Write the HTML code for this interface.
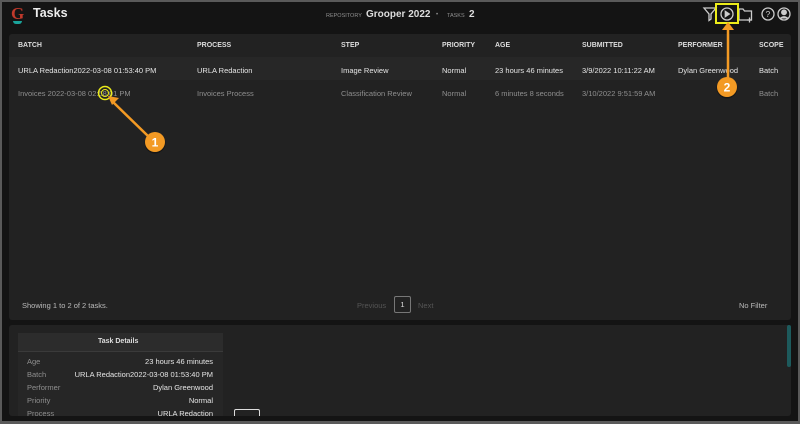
<!DOCTYPE html>
<html><head><meta charset="utf-8"><style>
*{margin:0;padding:0;box-sizing:border-box}
body{width:800px;height:424px;background:#5a5a5a;font-family:"Liberation Sans",sans-serif;overflow:hidden;position:relative}
.frame{position:absolute;left:2px;top:2px;width:796px;height:419px;background:#141414}
.t{position:absolute;white-space:nowrap;font-size:7.5px;color:#e6e6e6}
.h{font-weight:bold;font-size:7px;color:#ddd}
.g{color:#8f8f8f}
.panel{position:absolute;background:#222;border-radius:3px}
</style></head><body>
<div class="frame"></div>
<div class="t" style="left:11px;top:4px;font-family:'Liberation Serif',serif;font-size:17px;color:#c0392b;font-weight:bold">G</div>
<div style="position:absolute;left:13px;top:21px;width:9px;height:3px;background:#1aa39a;border-radius:0 0 4px 4px"></div>
<div class="t" style="left:33px;top:6px;font-size:12.5px;font-weight:bold;color:#eee">Tasks</div>
<div class="t g" style="left:326px;top:13px;font-size:5.5px">REPOSITORY</div>
<div class="t" style="left:366px;top:9px;font-size:10px;font-weight:bold;color:#ddd">Grooper 2022</div>
<div class="t g" style="left:436px;top:12px;font-size:6px">•</div>
<div class="t g" style="left:447px;top:13px;font-size:5.5px">TASKS</div>
<div class="t" style="left:469px;top:9px;font-size:10px;font-weight:bold;color:#ddd">2</div>
<svg style="position:absolute;left:700px;top:2px" width="96" height="24" viewBox="0 0 96 24" fill="none" stroke="#ccc" stroke-width="1.3">
<path d="M4 6h12l-5 6v5l-2 1.5v-6.5z"/>
<circle cx="27" cy="12" r="6"/><path d="M25.3 9.3v5.4l4-2.7z" fill="#ccc"/>
<path d="M39 7h4l1.5 2h7v9h-12.5z"/><path d="M47 18h5M49.5 15.5v5"/>
<circle cx="68" cy="12" r="6"/><text x="65.5" y="15" font-size="8.5" fill="#ccc" stroke="none" font-family="Liberation Sans">?</text>
<circle cx="84" cy="12" r="6"/><circle cx="84" cy="10.3" r="2.3" fill="#ccc"/><path d="M80 16.5q4-3.5 8 0" fill="#ccc"/>
</svg>
<div style="position:absolute;left:715px;top:3px;width:24px;height:21px;border:2px solid #ecec1a"></div>
<div class="panel" style="left:9px;top:34px;width:782px;height:286px"></div>
<div style="position:absolute;left:9px;top:57px;width:782px;height:23px;background:#272727"></div>
<div class="t h" style="left:18px;top:42px">BATCH</div>
<div class="t h" style="left:197px;top:42px">PROCESS</div>
<div class="t h" style="left:341px;top:42px">STEP</div>
<div class="t h" style="left:442px;top:42px">PRIORITY</div>
<div class="t h" style="left:495px;top:42px">AGE</div>
<div class="t h" style="left:582px;top:42px">SUBMITTED</div>
<div class="t h" style="left:678px;top:42px">PERFORMER</div>
<div class="t h" style="left:759px;top:42px">SCOPE</div>
<div class="t" style="left:18px;top:66px">URLA Redaction2022-03-08 01:53:40 PM</div>
<div class="t" style="left:197px;top:66px">URLA Redaction</div>
<div class="t" style="left:341px;top:66px">Image Review</div>
<div class="t" style="left:442px;top:66px">Normal</div>
<div class="t" style="left:495px;top:66px">23 hours 46 minutes</div>
<div class="t" style="left:582px;top:66px">3/9/2022 10:11:22 AM</div>
<div class="t" style="left:678px;top:66px">Dylan Greenwood</div>
<div class="t" style="left:759px;top:66px">Batch</div>
<div class="t g" style="left:18px;top:89px">Invoices 2022-03-08 02:58:01 PM</div>
<div class="t g" style="left:197px;top:89px">Invoices Process</div>
<div class="t g" style="left:341px;top:89px">Classification Review</div>
<div class="t g" style="left:442px;top:89px">Normal</div>
<div class="t g" style="left:495px;top:89px">6 minutes 8 seconds</div>
<div class="t g" style="left:582px;top:89px">3/10/2022 9:51:59 AM</div>
<div class="t g" style="left:759px;top:89px">Batch</div>
<div class="t g" style="left:22px;top:301px;color:#bbb">Showing 1 to 2 of 2 tasks.</div>
<div class="t" style="left:357px;top:301px;color:#555">Previous</div>
<div style="position:absolute;left:394px;top:296px;width:17px;height:17px;border:1px solid #777;border-radius:2px;color:#ddd;font-size:7.5px;text-align:center;line-height:15px">1</div>
<div class="t" style="left:418px;top:301px;color:#555">Next</div>
<div class="t" style="left:739px;top:301px;color:#bbb">No Filter</div>
<div class="panel" style="left:9px;top:325px;width:782px;height:91px"></div>
<div style="position:absolute;left:787px;top:325px;width:4px;height:42px;background:#1d5a5c;border-radius:2px"></div>
<div style="position:absolute;left:18px;top:333px;width:205px;height:83px;background:#262626"></div>
<div style="position:absolute;left:18px;top:333px;width:205px;height:19px;background:#2c2c2c;border-bottom:1px solid #3a3a3a"></div>
<div class="t" style="left:98px;top:338px;font-weight:bold;color:#ddd;font-size:7px">Task Details</div>
<div class="t g" style="left:27px;top:357px">Age</div><div class="t" style="right:587px;top:357px">23 hours 46 minutes</div>
<div class="t g" style="left:27px;top:370px">Batch</div><div class="t" style="right:587px;top:370px">URLA Redaction2022-03-08 01:53:40 PM</div>
<div class="t g" style="left:27px;top:383px">Performer</div><div class="t" style="right:587px;top:383px">Dylan Greenwood</div>
<div class="t g" style="left:27px;top:396px">Priority</div><div class="t" style="right:587px;top:396px">Normal</div>
<div class="t g" style="left:27px;top:409px">Process</div><div class="t" style="right:587px;top:409px">URLA Redaction</div>
<div style="position:absolute;left:234px;top:409px;width:26px;height:8px;border:1px solid #ddd;border-bottom:none;border-radius:2px 2px 0 0"></div>
<div style="position:absolute;left:9px;top:416px;width:782px;height:5px;background:#141414"></div>
<svg style="position:absolute;left:0;top:0" width="800" height="424">
<circle cx="105" cy="93" r="6.5" fill="none" stroke="#ecec1a" stroke-width="1.5"/>
<circle cx="105" cy="93" r="3.5" fill="none" stroke="#ecec1a" stroke-width="1"/>
<path d="M150 138L112 101" stroke="#f39a24" stroke-width="2.5"/>
<path d="M108 96l11 2-7 7z" fill="#f39a24"/>
<circle cx="155" cy="143" r="10.5" fill="#000" opacity=".35"/>
<circle cx="155" cy="142" r="10" fill="#f39a24"/>
<text x="155" y="146.5" font-size="12" font-weight="bold" fill="#fff" text-anchor="middle" font-family="Liberation Sans">1</text>
<path d="M728 80V26" stroke="#f39a24" stroke-width="2.5"/>
<path d="M722 30l6-8 6 8z" fill="#f39a24"/>
<circle cx="727" cy="88" r="10.5" fill="#000" opacity=".35"/>
<circle cx="727" cy="87" r="10" fill="#f39a24"/>
<text x="727" y="91.5" font-size="12" font-weight="bold" fill="#fff" text-anchor="middle" font-family="Liberation Sans">2</text>
</svg>
</body></html>
